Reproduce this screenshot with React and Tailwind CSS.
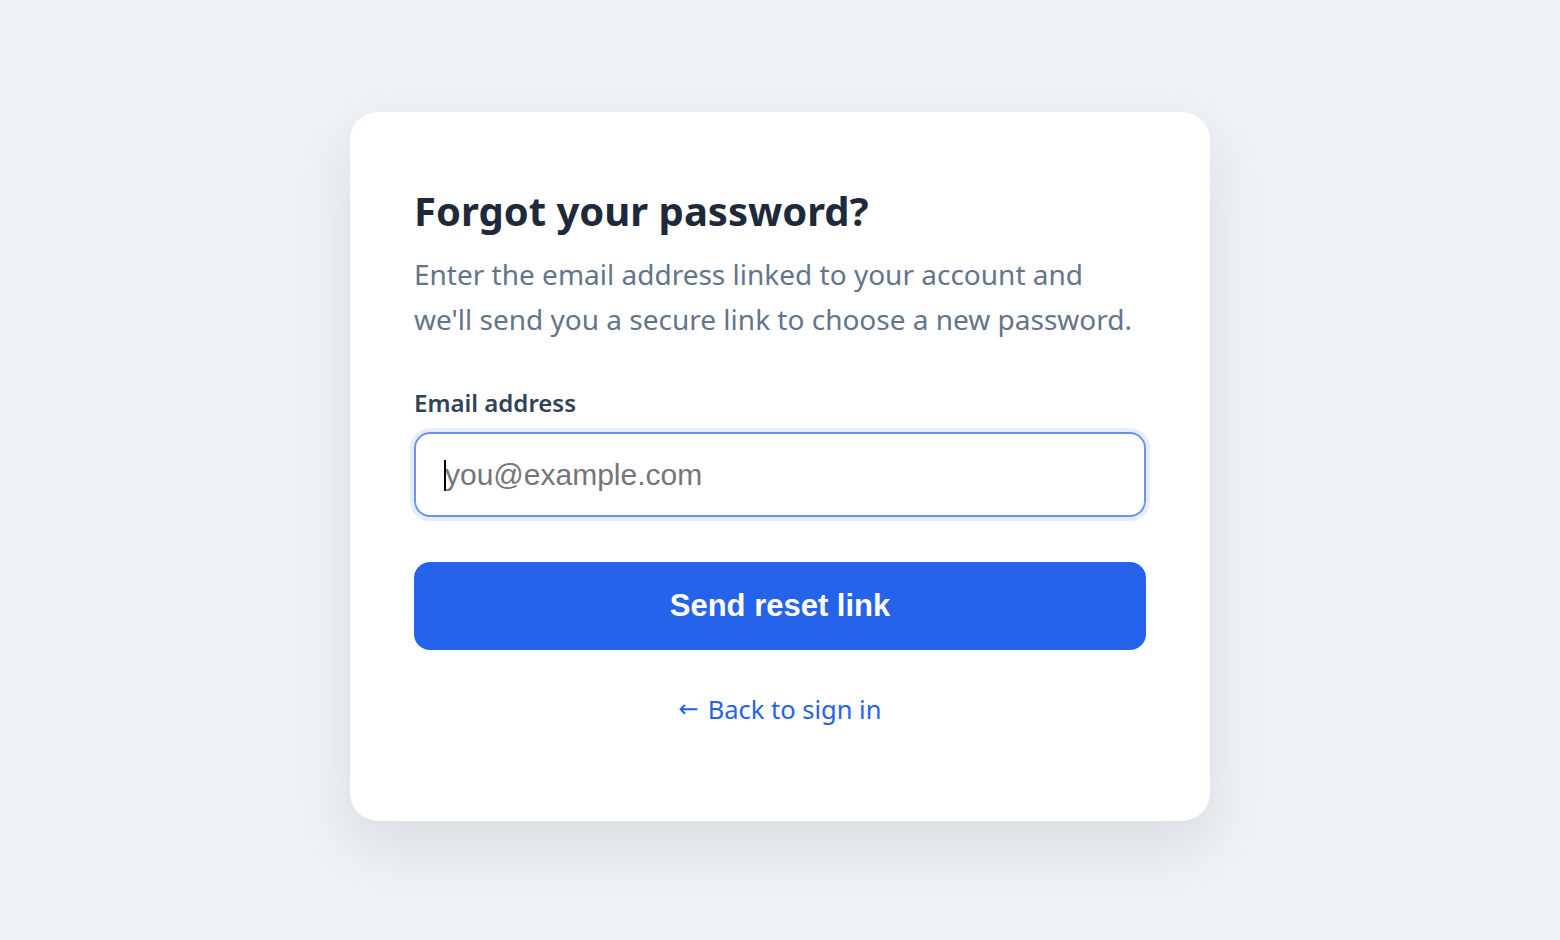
import { useState } from "react";

export default function App() {
  const [email, setEmail] = useState("");

  return (
    <main className="min-h-screen w-full bg-[#eef1f5] pt-[112px] font-['Noto_Sans',sans-serif]">
      <div className="mx-auto w-[860px] rounded-[28px] bg-white px-16 pt-16 pb-[94px] shadow-[0_24px_60px_rgba(15,23,42,0.09)]">
        <h1 className="text-[40px] leading-[70px] font-bold text-[#1e293b]">Forgot your password?</h1>
        <p className="mt-[6px] text-[28px] leading-[45px] text-[#64748b]">
          Enter the email address linked to your account and we'll send you a secure link to choose a new password.
        </p>

        <form className="mt-[45px]" onSubmit={(e) => e.preventDefault()}>
          <label htmlFor="email" className="block text-[24px] leading-[32px] font-semibold text-[#334155]">
            Email address
          </label>
          <div className="relative mt-[13px]">
            <input
              id="email"
              type="email"
              autoFocus
              value={email}
              onChange={(e) => setEmail(e.target.value)}
              placeholder="you@example.com"
              className="block h-[85px] w-full rounded-[16px] border-2 border-[#6b93ea] px-[29px] font-['Liberation_Sans',sans-serif] text-[30px] text-[#1e293b] placeholder:text-[#75757a] outline-none shadow-[0_0_0_4px_#e6edfc]"
            />
            {/* text caret while the field is empty */}
            {email === "" && (
              <span className="pointer-events-none absolute left-[30px] top-[28px] h-[31px] w-[2px] bg-black" />
            )}
          </div>

          <button
            type="submit"
            className="mt-[45px] block h-[88px] w-full rounded-[16px] bg-[#2563eb] font-['Liberation_Sans',sans-serif] text-[31px] font-bold text-white"
          >
            Send reset link
          </button>
        </form>

        <div className="mt-[41px] text-center">
          <a href="#" className="inline-flex items-center gap-[9px] text-[25.5px] leading-[36px] text-[#2563eb]">
            <span className="font-['DejaVu_Sans',sans-serif] text-[24px] leading-none">←</span>
            <span>Back to sign in</span>
          </a>
        </div>
      </div>
    </main>
  );
}
